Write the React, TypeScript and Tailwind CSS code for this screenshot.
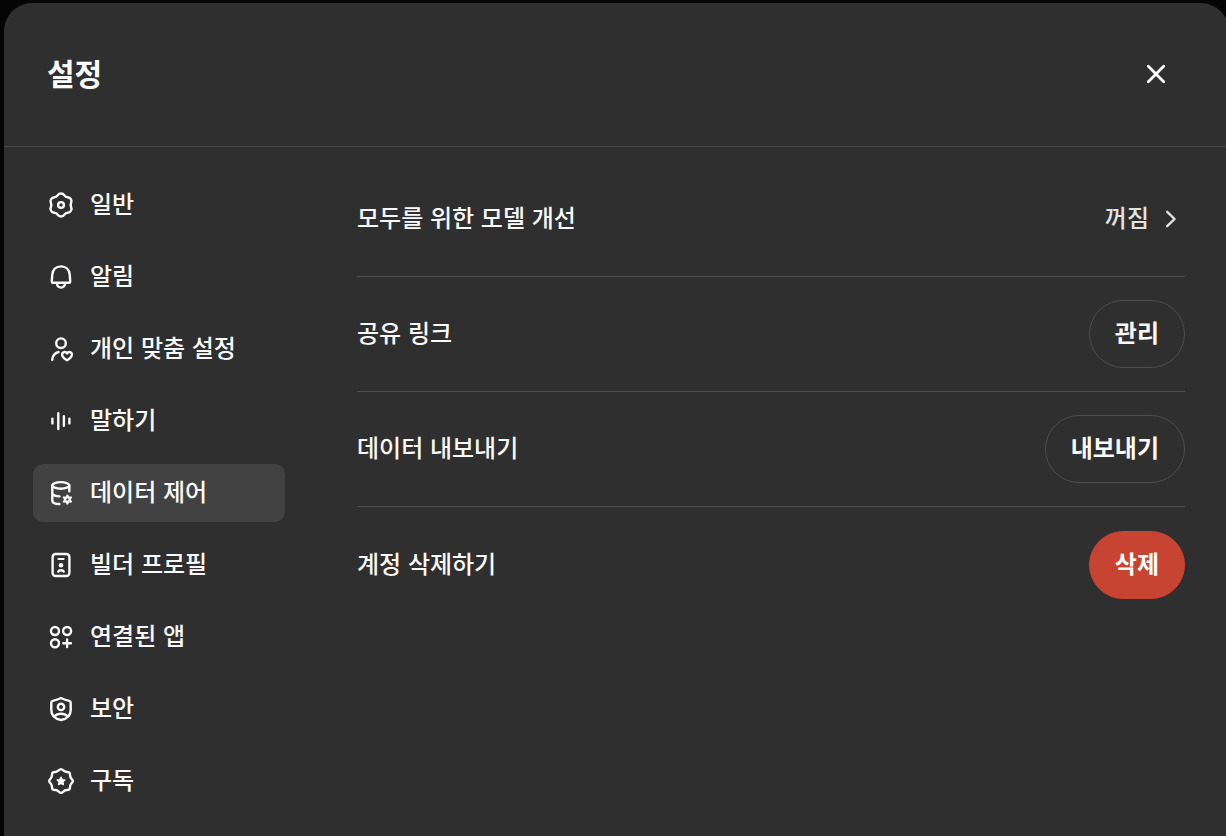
import React, { useState } from 'react';
import { clsx } from 'clsx';

// closed wavy ring, used for the gear and the badge outlines
// spread is half the width of a lobe in degrees
const wavyRing = (lobes: number, outer: number, inner: number, spread: number) => {
  const step = 360 / lobes;
  const points: number[][] = [];
  const add = (deg: number, r: number) => {
    const a = (deg * Math.PI) / 180;
    points.push([14 + r * Math.cos(a), 14 + r * Math.sin(a)]);
  };
  for (let i = 0; i < lobes; i++) {
    const deg = i * step - 90;
    add(deg - spread, outer);
    add(deg + spread, outer);
    add(deg + step / 2, inner);
  }
  const mid = (i: number) => {
    const a = points[i % points.length];
    const b = points[(i + 1) % points.length];
    return `${((a[0] + b[0]) / 2).toFixed(2)} ${((a[1] + b[1]) / 2).toFixed(2)}`;
  };
  let d = `M${mid(points.length - 1)}`;
  points.forEach((p, i) => {
    d += `Q${p[0].toFixed(2)} ${p[1].toFixed(2)} ${mid(i)}`;
  });
  return d + 'Z';
};

const Icon: React.FC<{ children: React.ReactNode }> = ({ children }) => (
  <svg
    viewBox="0 0 28 28"
    className="size-7 shrink-0"
    fill="none"
    stroke="currentColor"
    strokeWidth="2.4"
    strokeLinecap="round"
    strokeLinejoin="round"
    aria-hidden="true"
  >
    {children}
  </svg>
);

const GearIcon = () => (
  <Icon>
    <path d={wavyRing(6, 11.7, 9.1, 11)} />
    <circle cx="14" cy="14" r="2.9" />
  </Icon>
);

const BellIcon = () => (
  <Icon>
    <path d="M14 3.4C9 3.4 5.7 6.9 5.3 11.5L4.8 17.9C4.7 19.3 5.2 19.8 6.3 19.8H21.7C22.8 19.8 23.3 19.3 23.2 17.9L22.7 11.5C22.3 6.9 19 3.4 14 3.4Z" />
    <path d="M9.8 20.2C10.2 23.2 12 24.6 14 24.6S17.8 23.2 18.2 20.2" />
  </Icon>
);

const PersonHeartIcon = () => (
  <Icon>
    <circle cx="14" cy="8.2" r="4.8" />
    <path d="M5.2 24.8C5.5 21 7.9 18 11.5 17" />
    <path d="M20 25.2C17 23.6 15.1 21.7 15.1 19.6C15.1 16.9 18.5 16 20 18.5C21.5 16 24.9 16.9 24.9 19.6C24.9 21.7 23 23.6 20 25.2Z" />
  </Icon>
);

const VoiceIcon = () => (
  <Icon>
    <path d="M5.4 11.6V16.4M11.3 6.2V22M16.9 9.2V18.8M22.4 11.6V16.4" />
  </Icon>
);

const DataIcon = () => (
  <Icon>
    <ellipse cx="13.8" cy="6.4" rx="8.5" ry="3.3" />
    <path d="M22.3 6.4V12.2M5.3 6.4V21.4C5.3 23.5 8.3 24.9 12.4 25M5.3 14.4C5.8 16.1 8.7 17.2 12.5 17.4" />
    <circle cx="20.4" cy="20.5" r="2.4" />
    <path d="M20.4 18V16.6M20.4 23V24.4M22.6 19.2L23.8 18.5M18.2 21.8L17 22.5M22.6 21.8L23.8 22.5M18.2 19.2L17 18.5" />
  </Icon>
);

const ProfileIcon = () => (
  <Icon>
    <rect x="5.6" y="3" width="16.8" height="22" rx="3" />
    <path d="M11.4 8H16.6" strokeWidth="2" />
    <circle cx="14" cy="14.2" r="2.3" fill="currentColor" stroke="none" />
    <path d="M11.3 20.6C11.8 18.8 16.2 18.8 16.7 20.6" />
  </Icon>
);

const AppsIcon = () => (
  <Icon>
    <circle cx="8" cy="8" r="4" />
    <circle cx="20.1" cy="8" r="4" />
    <circle cx="8" cy="20.2" r="4" />
    <path d="M20.1 16.4V24M16.3 20.2H23.9" />
  </Icon>
);

const ShieldIcon = () => (
  <Icon>
    <path d="M14 3C12 4.1 8.6 5.2 5.8 5.9C4.8 6.2 4.3 6.8 4.3 7.8V15C4.3 20.4 8.2 23.9 14 25C19.8 23.9 23.7 20.4 23.7 15V7.8C23.7 6.8 23.2 6.2 22.2 5.9C19.4 5.2 16 4.1 14 3Z" />
    <circle cx="14" cy="11.9" r="3.2" />
    <path d="M7.4 21.4C9 19.6 11.3 18.7 14 18.7S19 19.6 20.6 21.4" />
  </Icon>
);

const BadgeIcon = () => (
  <Icon>
    <path d={wavyRing(8, 11.9, 9.9, 4)} />
    <path
      d="M14 10.2L15.2 12.6L17.8 13L15.9 14.8L16.4 17.5L14 16.3L11.6 17.5L12.1 14.8L10.2 13L12.8 12.6Z"
      fill="currentColor"
      strokeWidth="1.4"
    />
  </Icon>
);

const tabs = [
  { id: 'general', label: '일반', icon: GearIcon },
  { id: 'notifications', label: '알림', icon: BellIcon },
  { id: 'personalization', label: '개인 맞춤 설정', icon: PersonHeartIcon },
  { id: 'speech', label: '말하기', icon: VoiceIcon },
  { id: 'data', label: '데이터 제어', icon: DataIcon },
  { id: 'builder', label: '빌더 프로필', icon: ProfileIcon },
  { id: 'apps', label: '연결된 앱', icon: AppsIcon },
  { id: 'security', label: '보안', icon: ShieldIcon },
  { id: 'subscription', label: '구독', icon: BadgeIcon },
];

const Row: React.FC<{ label: string; children: React.ReactNode }> = ({ label, children }) => (
  <div className="flex min-h-[115px] items-center justify-between border-b border-[#4d4d4d] last:border-b-0">
    <span className="pb-1">{label}</span>
    {children}
  </div>
);

const PillButton: React.FC<{ danger?: boolean; children: React.ReactNode }> = ({ danger, children }) => (
  <button
    type="button"
    className={clsx(
      'h-[68px] rounded-full border px-[25px] pb-1 font-bold',
      danger ? 'border-[#c74332] bg-[#c74332] text-white' : 'border-[#4d4d4d] hover:bg-[#424242]'
    )}
  >
    {children}
  </button>
);

export default function App() {
  const [active, setActive] = useState('data');

  return (
    <div className="flex min-h-screen overflow-hidden bg-[#050505] pt-[3px] pl-1 font-['Noto_Sans_CJK_KR','Noto_Sans_CJK_JP',sans-serif] text-2xl font-medium text-[#fafafa]" lang="ko">
      <div role="dialog" aria-labelledby="settings-title" className="-mr-[3px] flex grow flex-col rounded-t-[28px] bg-[#2f2f2f]">
        <header className="flex h-36 items-center justify-between border-b border-[#454545] pr-[49px] pb-0.5 pl-[43px]">
          <h1 id="settings-title" className="pb-1 text-3xl font-bold">설정</h1>
          <button type="button" aria-label="닫기" className="flex size-12 items-center justify-center rounded-full text-white hover:bg-[#424242]">
            <Icon>
              <path d="M6.3 6.3L21.7 21.7M21.7 6.3L6.3 21.7" strokeWidth="2.8" />
            </Icon>
          </button>
        </header>

        <div className="flex grow gap-[72px] pr-11 pl-[29px]">
          <nav className="flex w-[252px] shrink-0 flex-col gap-[14px] pt-[29px] pb-6">
            {tabs.map(({ id, label, icon: TabIcon }) => (
              <button
                key={id}
                type="button"
                onClick={() => setActive(id)}
                className={clsx(
                  'flex h-[58px] items-center gap-[15px] rounded-[10px] px-[14px] text-left',
                  active === id && 'bg-[#424242]'
                )}
              >
                <TabIcon />
                <span className="pb-1">{label}</span>
              </button>
            ))}
          </nav>

          <main className="min-w-0 grow pt-[15px]">
            <Row label="모두를 위한 모델 개선">
              <button type="button" className="flex items-center gap-2 text-[#e3e3e3]">
                <span className="pb-1">꺼짐</span>
                <Icon>
                  <path d="M10.2 6.8L17.6 14L10.2 21.2" />
                </Icon>
              </button>
            </Row>
            <Row label="공유 링크">
              <PillButton>관리</PillButton>
            </Row>
            <Row label="데이터 내보내기">
              <PillButton>내보내기</PillButton>
            </Row>
            <Row label="계정 삭제하기">
              <PillButton danger>삭제</PillButton>
            </Row>
          </main>
        </div>
      </div>
    </div>
  );
}
